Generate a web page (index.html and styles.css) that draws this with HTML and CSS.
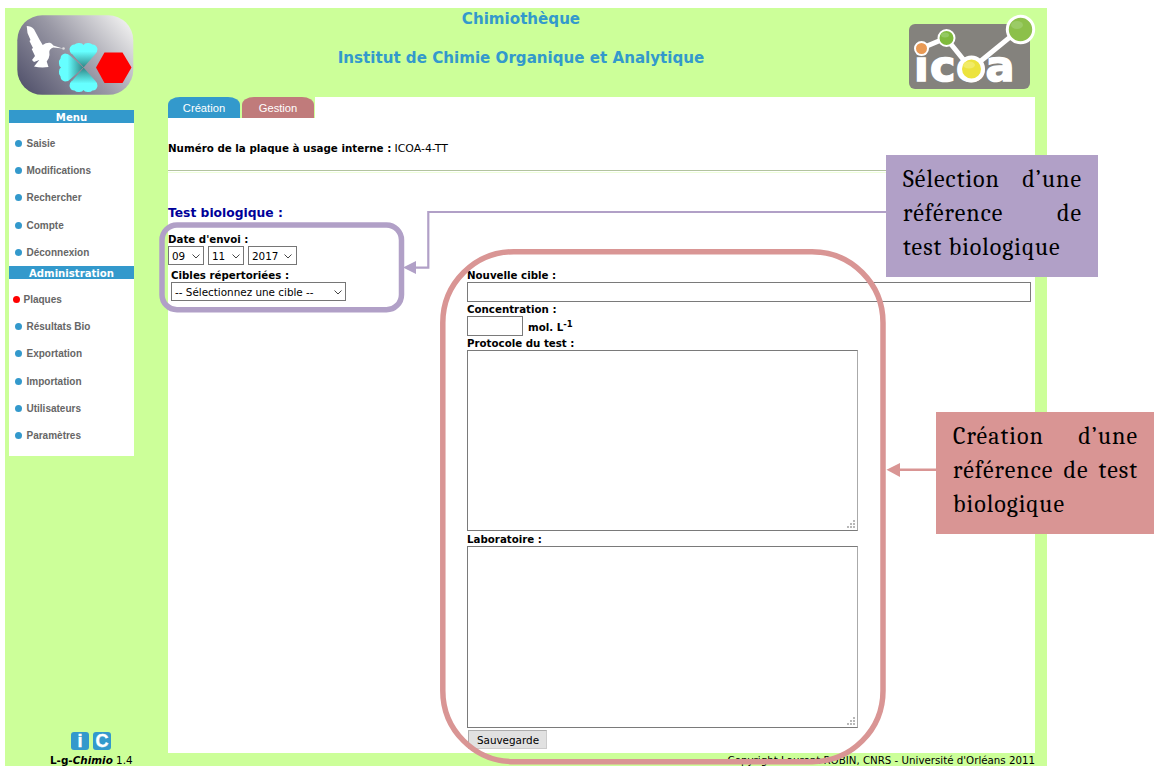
FILE: index.html
```
<!DOCTYPE html>
<html lang="fr">
<head>
<meta charset="utf-8">
<title>Chimiothèque</title>
<link rel="stylesheet" href="styles.css">
</head>
<body>
<div class="page">
  <aside class="sidebar">
    <svg class="logo" width="117" height="80" viewBox="0 0 117 80">
      <defs>
        <linearGradient id="plate" x1="0" y1="0.8" x2="1" y2="0.2"><stop offset="0" stop-color="#56566f"/><stop offset="0.5" stop-color="#9998a5"/><stop offset="1" stop-color="#ececec"/></linearGradient>
        <linearGradient id="leaf" x1="0" y1="0" x2="0" y2="1"><stop offset="0.35" stop-color="#66ffff"/><stop offset="1" stop-color="#2f8585"/></linearGradient>
        <path id="heart" d="M0 0 L-11.500 -13 Q-14 -15 -14 -18.500 Q-13 -23 -9 -23 Q-7 -25 -4 -24.500 Q-1 -24.500 0 -22.500 Q1 -24.500 4 -24.500 Q7 -25 9 -23 Q13 -23 14 -18.500 Q14 -15 11.500 -13 Z"/>
      </defs>
      <rect x="0.300" y="0.300" width="116" height="79.500" rx="25" fill="url(#plate)"/>
      <path d="M9.700 11 Q14 11 17 14.300 L22.300 24.300 L25.700 30 Q29 27.300 33 27.700 Q35 28.500 36.300 30.500 L45.700 33.500 L36.300 32.500 Q32.500 34 32.300 36.700 Q33 40 31.700 43.300 L29.700 46.500 L31.500 52 Q24 53 17 51.500 L22.300 45 L17 47 L15 45 L18 41 L14.700 34 L16 33 L12.500 26 L13.500 25 L10.500 18 Z" fill="#fff"/>
      <circle cx="46.500" cy="33.500" r="1.300" fill="#ddd"/>
      <g fill="url(#leaf)">
        <use href="#heart" transform="translate(66.500 52.500)"/>
        <use href="#heart" transform="translate(66.500 52.500) rotate(180)"/>
        <use href="#heart" transform="translate(66.500 52.500) rotate(-90)"/>
      </g>
      <path d="M66.500 52.500 L54.500 39 M66.500 52.500 L54.500 66" stroke="#8d8c9b" stroke-width="1"/>
      <path d="M79 52.500 L87.500 37.500 H105.500 L114.500 52.500 L105.500 68 H87.500 Z" fill="#f00"/>
    </svg>
    <nav class="menu">
      <h3 class="menu-title">Menu</h3>
      <ul class="menu-list">
        <li>Saisie</li><li>Modifications</li><li>Rechercher</li><li>Compte</li><li>Déconnexion</li>
      </ul>
      <h3 class="menu-title">Administration</h3>
      <ul class="menu-list menu-list-last">
        <li class="active">Plaques</li><li>Résultats Bio</li><li>Exportation</li><li>Importation</li><li>Utilisateurs</li><li>Paramètres</li>
      </ul>
    </nav>
    <div class="badges"><span>i</span><span>C</span></div>
    <div class="version"><b>L-g-<i>Chimio</i></b> 1.4</div>
  </aside>

  <header class="header">
    <div class="titles">
      <h1>Chimiothèque</h1>
      <h1>Institut de Chimie Organique et Analytique</h1>
    </div>
    <svg class="icoa" width="127" height="76" viewBox="0 0 127 76">
      <rect x="0" y="10" width="121" height="65" rx="6" fill="#84827d"/>
      <text class="icoa-text" y="66.500" x="5 21 47 76.500">icoa</text>
      <path d="M12 34.500 L37 24 L62 55 L111 15" fill="none" stroke="#fff" stroke-width="5"/>
      <g stroke="#fff" stroke-width="2">
        <circle cx="12.500" cy="34.500" r="6.500" fill="#e99a55"/>
        <circle cx="37.500" cy="24" r="8" fill="#80bb3d"/>
        <circle cx="62.500" cy="55" r="11.500" fill="#ece33d" stroke-width="4"/>
        <circle cx="111.500" cy="15.500" r="13.200" fill="#8cc04a" stroke-width="3"/>
      </g>
      <ellipse cx="108" cy="11" rx="6" ry="4" fill="#9bcb66"/>
      <ellipse cx="60" cy="51" rx="6" ry="3.500" fill="#f1eb67"/>
      <ellipse cx="36" cy="21" rx="4" ry="2.500" fill="#94c962"/>
    </svg>
  </header>

  <main class="content">
    <div class="tabs"><span class="tab">Création</span><span class="tab tab-alt">Gestion</span></div>
    <p class="plate"><b>Numéro de la plaque à usage interne :</b> <span>ICOA-4-TT</span></p>
    <div class="rule"></div>
    <h2>Test biologique :</h2>
    <div class="label">Date d'envoi :</div>
    <div class="dates">
      <div class="select day">09<svg width="8" height="5"><path d="M.5.5 4 4 7.500.5"/></svg></div>
      <div class="select day">11<svg width="8" height="5"><path d="M.5.5 4 4 7.500.5"/></svg></div>
      <div class="select year">2017<svg width="8" height="5"><path d="M.5.5 4 4 7.500.5"/></svg></div>
    </div>
    <div class="form">
      <div class="targets">
        <div class="label">Cibles répertoriées :</div>
        <div class="select target">-- Sélectionnez une cible --<svg width="8" height="5"><path d="M.5.5 4 4 7.500.5"/></svg></div>
      </div>
      <div class="fields">
        <div class="label">Nouvelle cible :</div>
        <input class="input wide" type="text">
        <div class="label">Concentration :</div>
        <div class="conc"><input class="input small" type="text"><b>mol. L<sup>-1</sup></b></div>
        <div class="label">Protocole du test :</div>
        <div class="area"><svg width="8" height="8"><path d="M6 0h2v2H6zM3 3h2v2H3zM6 3h2v2H6zM0 6h2v2H0zM3 6h2v2H3zM6 6h2v2H6z"/></svg></div>
        <div class="label second">Laboratoire :</div>
        <div class="area tall"><svg width="8" height="8"><path d="M6 0h2v2H6zM3 3h2v2H3zM6 3h2v2H6zM0 6h2v2H0zM3 6h2v2H3zM6 6h2v2H6z"/></svg></div>
        <button class="save" type="button">Sauvegarde</button>
      </div>
    </div>
  </main>
  <footer class="footer">Copyright Laurent ROBIN, CNRS - Université d'Orléans 2011</footer>
</div>

<svg class="marks" width="1160" height="773">
  <g fill="none" stroke="#b1a0c7">
    <rect x="162" y="225" width="239.500" height="84.700" rx="15" stroke-width="5.500"/>
    <path d="M886 212 H428.300 V267.700 H414" stroke-width="2.200"/>
  </g>
  <path d="M403 267.500 L416 261 V274 Z" fill="#b1a0c7"/>
  <g fill="none" stroke="#d99594">
    <rect x="442.800" y="251.700" width="440.200" height="510" rx="71" stroke-width="5.500"/>
    <path d="M936 469.800 H898" stroke-width="2.400"/>
  </g>
  <path d="M886.500 469.800 L900 463 V477 Z" fill="#d99594"/>
</svg>
<div class="note note-select">
  <div class="spread">Sélection d’une</div><div class="spread">référence de</div><div>test biologique</div>
</div>
<div class="note note-create">
  <div class="spread">Création d’une</div><div class="spread">référence de test</div><div>biologique</div>
</div>
</body>
</html>
```
FILE: styles.css
```
* { box-sizing: border-box; }
body { margin: 0; padding: 8px 0 0 5px; width: 1160px; height: 773px; overflow: hidden; background: #fff; color: #000; font-family: "DejaVu Sans", sans-serif; font-size: 10.25px; position: relative; }
h1, h2, h3, p, ul { margin: 0; padding: 0; }

.page { width: 1042px; height: 758px; background: #cf9; display: grid; grid-template-columns: 163px 867px 12px; grid-template-rows: 89px 656px 13px; overflow: hidden; }

.sidebar { grid-row: 1 / 4; padding: 7px 0 0 4px; display: flex; flex-direction: column; }
.logo { margin-left: 8px; display: block; flex: none; }
.menu { width: 125px; margin-top: 15px; }
.menu-title { height: 13px; line-height: 15px; background: #39c; color: #fff; font-size: 10.15px; text-align: center; }
.menu-list { list-style: none; background: #fff; height: 143px; padding: 7px 0 0 6px; font: bold 10px "Liberation Sans", sans-serif; color: #666; }
.menu-list-last { height: 177px; }
.menu-list li { height: 27.200px; display: flex; align-items: center; gap: 4.500px; }
.menu-list li::before { content: ""; width: 7px; height: 7px; border-radius: 50%; background: #39c; }
.menu-list .active { margin-left: -2px; gap: 3.500px; }
.menu-list .active::before { background: #f00; }
.badges { margin: auto 0 0 62px; display: flex; gap: 4px; }
.badges span { width: 18px; height: 18px; border-radius: 3px; background: #39c; color: #fff; font: bold 18px/18px "Liberation Sans", sans-serif; text-align: center; -webkit-text-stroke: .4px #fff; }
.version { margin: 4px 0 0 41px; height: 12px; line-height: 13px; font-size: 10.400px; white-space: nowrap; }

.header { grid-column: 2 / 4; display: flex; }
.titles { width: 705px; padding: 1px 0 0 1px; }
h1 { font-size: 15.100px; line-height: 20px; text-align: center; color: #39c; margin-bottom: 19px; white-space: nowrap; }
.titles h1 { width: 704px; }
.icoa { margin: 6px 0 0 36px; overflow: visible; }
.icoa-text { font: bold 43px "DejaVu Sans", sans-serif; fill: #fff; stroke: #fff; stroke-width: 1.500px; }

.content { background: #fff; grid-column: 2; }
.tabs { width: 147px; height: 21px; display: flex; gap: 2px; background: #cf9; }
.tab { width: 72px; height: 21px; border-radius: 12px 12px 0 0 / 8px 8px 0 0; background: #39c; color: #fff; font: 11.200px/22px "Liberation Sans", sans-serif; text-align: center; }
.tab-alt { background: #c07b7b; }
.plate { margin-top: 23px; height: 14px; line-height: 14px; font-size: 10.300px; white-space: nowrap; }
.plate span { font-size: 10.900px; }
.rule { margin-top: 15px; height: 3px; border-top: 1px solid #b3c3a0; border-bottom: 1px solid #efffdc; }
h2 { margin-top: 31px; height: 18px; line-height: 19px; font-size: 12.300px; color: #009; }
.label { height: 13px; line-height: 13px; font-weight: bold; font-size: 10.250px; white-space: nowrap; }
h2 + .label { margin-top: 11px; }
.dates { height: 19px; display: flex; gap: 4px; }
.select { height: 19px; border: 1px solid #767676; background: #fff; display: flex; align-items: center; justify-content: space-between; padding: 1px 3px 0 3px; font-size: 10.400px; white-space: nowrap; }
.select svg { fill: none; stroke: #444; }
.day { width: 36px; }
.year { width: 49px; padding-right: 4px; }
.form { margin-top: 4px; display: grid; grid-template-columns: 299px 568px; }
.targets { padding-left: 3px; }
.target { width: 175px; }
.fields { display: flex; flex-direction: column; align-items: flex-start; }
.input { display: block; height: 20px; border: 1px solid #7a7a7a; padding: 0; margin: 0 0 1px; background: #fff; }
.wide { width: 564px; }
.small { width: 56px; }
.conc { display: flex; gap: 5px; line-height: 22px; height: 21px; }
.conc sup { font-size: 8.500px; line-height: 0; vertical-align: 4px; }
.area { width: 391px; height: 181px; border: 1px solid #7a7a7a; border-right-color: #aaa; display: flex; align-items: flex-end; justify-content: flex-end; padding: 2px; }
.area svg { fill: #b8b8b8; }
.tall { height: 182px; }
.second { margin-top: 2px; }
.save { margin: 2px 0 0 1px; width: 79px; height: 19px; border: 1px solid #ccc; border-top-color: #adadad; border-left-color: #adadad; background: #e1e1e1; padding: 0 0 0 1px; font: 10.400px "DejaVu Sans", sans-serif; color: #000; }
.footer { grid-column: 2; text-align: right; line-height: 15px; font-size: 10.250px; white-space: nowrap; }

.marks { position: absolute; left: 0; top: 0; }
.note { position: absolute; height: 122px; padding: 7px 17px; font: 24px/34px Cambria, Caladea, serif; letter-spacing: 1px; white-space: nowrap; }
.note-select { left: 886px; top: 155px; width: 212px; background: #b1a0c7; }
.note-create { left: 936px; top: 412px; width: 218px; background: #d99594; }
.spread { text-align-last: justify; margin-right: -1px; }
```
